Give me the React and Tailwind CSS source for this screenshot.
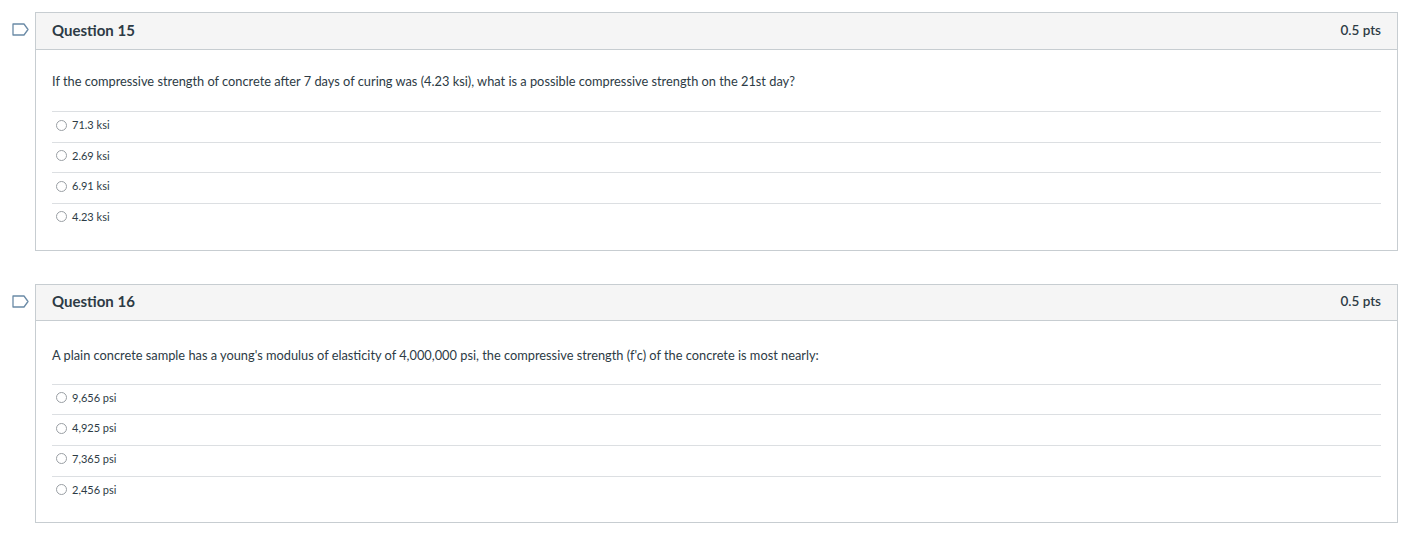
import React from 'react';

const questions = [
  {
    id: 15,
    points: '0.5 pts',
    text: 'If the compressive strength of concrete after 7 days of curing was (4.23 ksi), what is a possible compressive strength on the 21st day?',
    textClass: 'pt-[22.5px] pb-[21px]',
    answers: ['71.3 ksi', '2.69 ksi', '6.91 ksi', '4.23 ksi'],
  },
  {
    id: 16,
    points: '0.5 pts',
    text: "A plain concrete sample has a young's modulus of elasticity of 4,000,000 psi, the compressive strength (f'c) of the concrete is most nearly:",
    textClass: 'pt-[24.5px] pb-[20px]',
    answers: ['9,656 psi', '4,925 psi', '7,365 psi', '2,456 psi'],
  },
];

function Flag() {
  return (
    <svg width="17" height="13" viewBox="0 0 17 13" className="shrink-0 mt-[11px]">
      <path d="M1 1 H12 L16 6.5 L12 12 H1 Z" fill="none" stroke="#6a8aa6" strokeWidth="1.3" strokeLinejoin="round" />
    </svg>
  );
}

function Question({ q }) {
  return (
    <div className="flex gap-[6px]">
      <Flag />
      <div className="flex-1 border border-[#c7cdd1] bg-white">
        {/* Header */}
        <div className="flex justify-between items-center h-[36.5px] px-4 pb-[2px] bg-[#f5f5f5] border-b border-[#c7cdd1] text-[#2d3b45]">
          <span className="font-bold text-[15px]">Question {q.id}</span>
          <span className="font-semibold text-[13.5px]">{q.points}</span>
        </div>
        {/* Body */}
        <div className="px-4 pb-[16px]">
          <div className={`${q.textClass} text-[12.8px] leading-[18px] text-[#2d3b45]`}>{q.text}</div>
          {q.answers.map(a => (
            <div key={a} className="flex items-center gap-[5px] border-t border-[#dcdfe2] pt-[6px] pb-[9.67px] pl-[4px] leading-[14px] text-[11px] text-[#2d3b45]">
              <span className="w-[11px] h-[11px] rounded-full border border-[#9a9fa4] shrink-0" />
              <span>{a}</span>
            </div>
          ))}
        </div>
      </div>
    </div>
  );
}

export default function App() {
  return (
    <div className="w-[1424px] h-[535px] bg-white pl-[12px] pr-[26px] pt-[12px] flex flex-col gap-[33px]" style={{ fontFamily: 'Lato, "Liberation Sans", sans-serif' }}>
      {questions.map(q => (
        <Question key={q.id} q={q} />
      ))}
    </div>
  );
}
